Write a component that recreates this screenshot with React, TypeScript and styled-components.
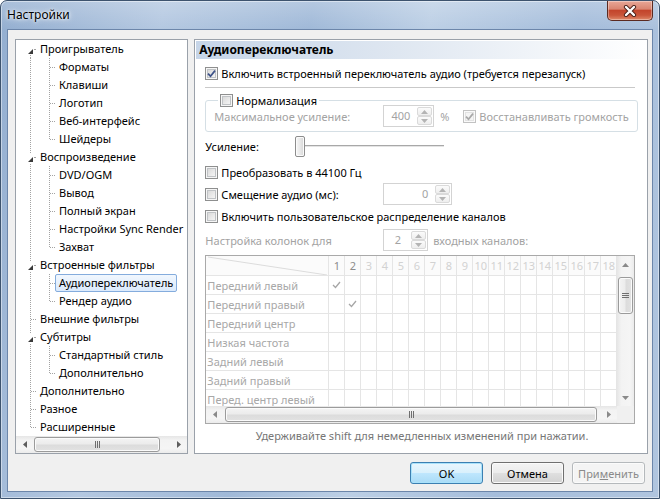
import React from "react";
import styled, { createGlobalStyle } from "styled-components";

const FONT = `"Noto Sans", "Open Sans", "DejaVu Sans", sans-serif`;

const GlobalStyle = createGlobalStyle`
  html, body {
    margin: 0;
    padding: 0;
  }
  body {
    width: 660px;
    height: 499px;
    overflow: hidden;
    font-family: ${FONT};
    font-size: 11px;
    color: #000;
  }
  * {
    box-sizing: border-box;
  }
`;

type TreeNode = { label: string; children?: string[] };

const tree: TreeNode[] = [
  { label: "Проигрыватель", children: ["Форматы", "Клавиши", "Логотип", "Веб-интерфейс", "Шейдеры"] },
  { label: "Воспроизведение", children: ["DVD/OGM", "Вывод", "Полный экран", "Настройки Sync Render", "Захват"] },
  { label: "Встроенные фильтры", children: ["Аудиопереключатель", "Рендер аудио"] },
  { label: "Внешние фильтры" },
  { label: "Субтитры", children: ["Стандартный стиль", "Дополнительно"] },
  { label: "Дополнительно" },
  { label: "Разное" },
  { label: "Расширенные" },
];

const SELECTED = "Аудиопереключатель";

const channels = [
  "Передний левый",
  "Передний правый",
  "Передний центр",
  "Низкая частота",
  "Задний левый",
  "Задний правый",
  "Перед. центр левый",
];

const Window = styled.div`
  width: 660px;
  height: 499px;
  display: flex;
  flex-direction: column;
  border: 1px solid #3d536e;
  border-radius: 7px 7px 0 0;
  background: linear-gradient(180deg, rgba(255, 255, 255, 0.22) 0, rgba(255, 255, 255, 0) 28px),
    linear-gradient(100deg, #93aed0 0%, #b4c8e1 22%, #a0b9d8 42%, #bccfe5 58%, #a5bddb 78%, #b0c5df 100%);
  box-shadow: inset 0 0 0 1px rgba(255, 255, 255, 0.45);
`;

const TitleBar = styled.div`
  height: 29px;
  display: flex;
  align-items: flex-start;
  justify-content: space-between;
`;

const Title = styled.div`
  padding: 6px 0 0 6px;
  line-height: 16px;
  font-size: 12px;
  text-shadow: 0 0 6px #fff, 0 0 3px #fff;
`;

const CloseButton = styled.div`
  width: 46px;
  height: 20px;
  margin-right: 6px;
  display: flex;
  align-items: center;
  justify-content: center;
  border: 1px solid #5b2a21;
  border-top: none;
  border-radius: 0 0 5px 5px;
  background: linear-gradient(180deg, #e8a797 0%, #d98571 42%, #c3452c 50%, #c9553a 75%, #df8a6b 100%);
  box-shadow: inset 0 0 0 1px rgba(255, 255, 255, 0.35);
`;

const Client = styled.div`
  flex: 1;
  margin: 0 7px 7px;
  padding: 9px 7px 0;
  display: flex;
  flex-direction: column;
  background: #f0f0f0;
  box-shadow: 0 0 0 1px #6c86aa;
`;

const Main = styled.div`
  height: 415px;
  display: flex;
  gap: 6px;
`;

const TreePanel = styled.div`
  width: 174px;
  display: flex;
  flex-direction: column;
  background: #fff;
  border: 1px solid #9aa1aa;
`;

const TreeList = styled.div`
  flex: 1;
  overflow: hidden;
`;

const TreeRow = styled.div`
  height: 18px;
  display: flex;
  align-items: center;
  white-space: nowrap;
`;

const GuideSvg = styled.svg`
  flex: none;
  display: block;
`;

const TreeLabel = styled.span<{ $selected?: boolean }>`
  height: 18px;
  line-height: 16px;
  padding: 0 3px;
  border: 1px solid ${(p) => (p.$selected ? "#84acdd" : "transparent")};
  border-radius: 2px;
  background: ${(p) => (p.$selected ? "linear-gradient(180deg, #f1f7fe 0%, #dbeafc 100%)" : "transparent")};
`;

const Page = styled.div`
  flex: 1;
  display: flex;
  flex-direction: column;
  background: #fff;
  border: 1px solid #9aa1aa;
`;

const PageHeader = styled.div`
  height: 18px;
  margin: 1px 1px 0;
  padding-left: 3px;
  line-height: 18px;
  font-weight: bold;
  font-size: 12px;
  background: linear-gradient(90deg, #c6d5e8 0%, #dfe7f1 45%, #ffffff 100%);
`;

const PageBody = styled.div`
  padding: 0 8px 0 10px;
  display: flex;
  flex-direction: column;
`;

const Row = styled.div<{ $mt?: number }>`
  height: 22px;
  margin-top: ${(p) => p.$mt ?? 0}px;
  display: flex;
  align-items: center;
  white-space: nowrap;
`;

const Text = styled.span<{ $disabled?: boolean; $w?: number; $ml?: number }>`
  color: ${(p) => (p.$disabled ? "#a3a3a3" : "#000")};
  width: ${(p) => (p.$w ? `${p.$w}px` : "auto")};
  margin-left: ${(p) => p.$ml ?? 0}px;
  flex: none;
`;

const Unit = styled.span`
  width: 29px;
  padding-left: 6px;
  flex: none;
  color: #a3a3a3;
`;

const CheckItem = styled.label<{ $w?: number }>`
  display: flex;
  align-items: center;
  gap: 3px;
  width: ${(p) => (p.$w ? `${p.$w}px` : "auto")};
  flex: none;
`;

const CheckBoxBox = styled.span<{ $disabled?: boolean }>`
  width: 13px;
  height: 13px;
  flex: none;
  display: inline-flex;
  align-items: center;
  justify-content: center;
  border: 1px solid ${(p) => (p.$disabled ? "#c2c2c2" : "#8e8f8f")};
  background: ${(p) =>
    p.$disabled ? "#f4f4f4" : "linear-gradient(135deg, #d2d2d2 0%, #ececec 60%, #fbfbfb 100%)"};
  box-shadow: inset 0 0 0 1px ${(p) => (p.$disabled ? "#fafafa" : "#f6f6f6")},
    inset 0 0 0 2px ${(p) => (p.$disabled ? "#e2e2e2" : "#c0c3c6")};
`;

const Separator = styled.div`
  height: 1px;
  margin: 3px 4px 0 0;
  background: #c9c9c9;
`;

const Group = styled.fieldset`
  margin: 4px 1px 0 0;
  padding: 0 8px 4px;
  min-width: 0;
  border: 1px solid #d5dfe5;
  border-radius: 3px;
`;

const GroupLegend = styled.legend`
  margin-left: 4px;
  padding: 0 2px;
  height: 16px;
  display: flex;
  align-items: center;
  gap: 3px;
`;

const GroupRow = styled(Row)`
  margin-top: -3px;
`;

const Spin = styled.div<{ $w: number }>`
  width: ${(p) => p.$w}px;
  height: 22px;
  flex: none;
  display: flex;
  border: 1px solid #d3d3d3;
  background: #fff;
`;

const SpinValue = styled.div<{ $center?: boolean }>`
  flex: 1;
  line-height: 20px;
  text-align: ${(p) => (p.$center ? "center" : "right")};
  padding-right: ${(p) => (p.$center ? 0 : 7)}px;
  color: #a3a3a3;
`;

const SpinButtons = styled.div`
  width: 15px;
  margin: 1px 1px 1px 0;
  display: flex;
  flex-direction: column;
`;

const SpinButton = styled.div`
  flex: 1;
  display: flex;
  align-items: center;
  justify-content: center;
  border: 1px solid #dadada;
  border-radius: 2px;
  background: linear-gradient(180deg, #fbfbfb, #eeeeee);
`;

const Slider = styled.div`
  width: 149px;
  height: 22px;
  flex: none;
  display: flex;
  align-items: center;
  background: linear-gradient(#a8a8a8, #a8a8a8) 4px 10px / 145px 1px no-repeat,
    linear-gradient(#e4e4e4, #e4e4e4) 4px 11px / 145px 1px no-repeat,
    linear-gradient(#ffffff, #ffffff) 4px 12px / 145px 1px no-repeat;
`;

const SliderThumb = styled.div`
  width: 10px;
  height: 21px;
  border: 1px solid #8d8d8d;
  border-radius: 2px;
  background: linear-gradient(90deg, #f7f7f7 0%, #e9e9e9 50%, #d6d6d6 100%);
  box-shadow: inset 0 0 0 1px #fbfbfb;
`;

const ChannelGrid = styled.div`
  width: 430px;
  height: 169px;
  margin-top: 4px;
  display: grid;
  grid-template-columns: 1fr 17px;
  grid-template-rows: 1fr 17px;
  border: 1px solid #a9a9a9;
  overflow: hidden;
`;

const Matrix = styled.div`
  display: grid;
  grid-template-columns: 123px repeat(18, 16px);
  grid-template-rows: 20px;
  grid-auto-rows: 19px;
  overflow: hidden;
  background: #fff;
`;

const Cell = styled.div<{ $head?: boolean; $label?: boolean; $enabled?: boolean }>`
  border-right: 1px solid #e5e5e5;
  border-bottom: 1px solid #e5e5e5;
  display: flex;
  align-items: center;
  justify-content: ${(p) => (p.$label ? "flex-start" : "center")};
  padding-left: ${(p) => (p.$label ? 1 : 0)}px;
  white-space: nowrap;
  overflow: hidden;
  color: ${(p) => (p.$head ? (p.$enabled ? "#8c8c8c" : "#d2d2d2") : "#a8a8a8")};
  background: ${(p) => (p.$head ? "#fbfbfb" : "#fff")};
`;

const Corner = styled.div`
  background: #f0f0f0;
`;

const ScrollBar = styled.div<{ $vertical?: boolean }>`
  display: flex;
  flex-direction: ${(p) => (p.$vertical ? "column" : "row")};
  ${(p) => (p.$vertical ? "width: 17px;" : "height: 17px;")}
  background: linear-gradient(
    ${(p) => (p.$vertical ? "90deg" : "180deg")},
    #e6e6e6 0%,
    #f3f3f3 25%,
    #f5f5f5 75%,
    #ebebeb 100%
  );
`;

const ScrollArrow = styled.div`
  width: 17px;
  height: 17px;
  flex: none;
  display: flex;
  align-items: center;
  justify-content: center;
`;

const ScrollSpace = styled.div`
  flex: 1;
`;

const ScrollThumb = styled.div<{ $vertical?: boolean; $before: number; $size: number }>`
  flex: none;
  display: flex;
  align-items: center;
  justify-content: center;
  ${(p) =>
    p.$vertical
      ? `margin: ${p.$before}px 1px 0; height: ${p.$size}px;`
      : `margin: 1px 0 1px ${p.$before}px; width: ${p.$size}px;`}
  border: 1px solid #9b9b9b;
  border-radius: 3px;
  background: linear-gradient(
    ${(p) => (p.$vertical ? "90deg" : "180deg")},
    #f4f4f4 0%,
    #ececec 45%,
    #dcdcdc 55%,
    #e2e2e2 100%
  );
  box-shadow: inset 0 0 0 1px #fbfbfb;
`;

const Footer = styled.div`
  height: 22px;
  margin-top: 1px;
  line-height: 22px;
  text-align: center;
  color: #767676;
`;

const ButtonBar = styled.div`
  margin-top: 8px;
  display: flex;
  justify-content: flex-end;
  gap: 8px;
`;

type Variant = "default" | "normal" | "disabled";

const DialogButton = styled.button<{ $variant: Variant }>`
  width: 73px;
  height: 22px;
  padding: 0;
  font-family: ${FONT};
  font-size: 11px;
  border-radius: 3px;
  color: ${(p) => (p.$variant === "disabled" ? "#8a8a8a" : "#000")};
  border: 1px solid
    ${(p) => (p.$variant === "default" ? "#3c7fb1" : p.$variant === "normal" ? "#707070" : "#b5b9bc")};
  background: ${(p) =>
    p.$variant === "default"
      ? "linear-gradient(180deg, #eaf6fd 0%, #d9f0fc 48%, #bee6fd 52%, #a9dbf6 100%)"
      : p.$variant === "normal"
        ? "linear-gradient(180deg, #f4f4f4 0%, #ececec 48%, #dfdfdf 52%, #d2d2d2 100%)"
        : "#f4f4f4"};
  box-shadow: inset 0 0 0 1px ${(p) => (p.$variant === "default" ? "#a9e2fb" : "#fbfbfb")};

  u {
    text-decoration: underline;
  }
`;

function CheckMark({ color }: { color: string }) {
  return (
    <svg width="9" height="9" viewBox="0 0 9 9">
      <path d="M1 4.6 L3.5 7.2 L8 1.6" fill="none" stroke={color} strokeWidth="1.7" />
    </svg>
  );
}

function CheckBox({ checked, disabled }: { checked?: boolean; disabled?: boolean }) {
  return (
    <CheckBoxBox $disabled={disabled}>
      {checked && <CheckMark color={disabled ? "#a8a8a8" : "#3d5288"} />}
    </CheckBoxBox>
  );
}

function Arrow({ dir, color = "#9a9a9a" }: { dir: "up" | "down" | "left" | "right"; color?: string }) {
  const pts = {
    up: "0,4 3.5,0 7,4",
    down: "0,0 3.5,4 7,0",
    left: "4,0 0,3.5 4,7",
    right: "0,0 4,3.5 0,7",
  }[dir];
  const vertical = dir === "up" || dir === "down";
  return (
    <svg width={vertical ? 7 : 4} height={vertical ? 4 : 7} viewBox={vertical ? "0 0 7 4" : "0 0 4 7"}>
      <polygon points={pts} fill={color} />
    </svg>
  );
}

function SpinEdit({ w, value, center }: { w: number; value: string; center?: boolean }) {
  return (
    <Spin $w={w}>
      <SpinValue $center={center}>{value}</SpinValue>
      <SpinButtons>
        <SpinButton>
          <Arrow dir="up" color="#b4b4b4" />
        </SpinButton>
        <SpinButton>
          <Arrow dir="down" color="#b4b4b4" />
        </SpinButton>
      </SpinButtons>
    </Spin>
  );
}

function Grip({ vertical }: { vertical?: boolean }) {
  return (
    <svg width="7" height="7" viewBox="0 0 7 7">
      <path
        d={vertical ? "M0 1.5 H7 M0 3.5 H7 M0 5.5 H7" : "M1.5 0 V7 M3.5 0 V7 M5.5 0 V7"}
        stroke="#6f6f6f"
        strokeWidth="1"
      />
    </svg>
  );
}

function Scroll({
  vertical,
  before,
  size,
  arrowColor,
}: {
  vertical?: boolean;
  before: number;
  size: number;
  arrowColor?: string;
}) {
  return (
    <ScrollBar $vertical={vertical}>
      <ScrollArrow>
        <Arrow dir={vertical ? "up" : "left"} color={arrowColor} />
      </ScrollArrow>
      <ScrollThumb $vertical={vertical} $before={before} $size={size}>
        <Grip vertical={vertical} />
      </ScrollThumb>
      <ScrollSpace />
      <ScrollArrow>
        <Arrow dir={vertical ? "down" : "right"} color={arrowColor} />
      </ScrollArrow>
    </ScrollBar>
  );
}

type FlatRow = {
  label: string;
  level: 0 | 1;
  firstRoot?: boolean;
  lastRoot?: boolean;
  hasChildren?: boolean;
  lastChild?: boolean;
};

function flatten(nodes: TreeNode[]): FlatRow[] {
  const rows: FlatRow[] = [];
  nodes.forEach((n, i) => {
    rows.push({
      label: n.label,
      level: 0,
      firstRoot: i === 0,
      lastRoot: i === nodes.length - 1,
      hasChildren: !!n.children,
    });
    n.children?.forEach((c, j) => {
      rows.push({ label: c, level: 1, lastChild: j === n.children!.length - 1 });
    });
  });
  return rows;
}

function Guides({ row }: { row: FlatRow }) {
  const dot = { stroke: "#a3a3a3", strokeDasharray: "1 1", strokeWidth: 1 };
  const width = row.level === 0 ? 20 : 39;
  return (
    <GuideSvg width={width} height={18} viewBox={`0 0 ${width} 18`}>
      {row.level === 0 ? (
        <>
          <line x1={14.5} x2={14.5} y1={row.firstRoot ? 9 : 0} y2={row.lastRoot ? 10 : 18} {...dot} />
          <line x1={15} x2={20} y1={9.5} y2={9.5} {...dot} />
        </>
      ) : (
        <>
          <line x1={14.5} x2={14.5} y1={0} y2={18} {...dot} />
          <line x1={33.5} x2={33.5} y1={0} y2={row.lastChild ? 10 : 18} {...dot} />
          <line x1={34} x2={39} y1={9.5} y2={9.5} {...dot} />
        </>
      )}
      {row.hasChildren && (
        <>
          <rect x={10} y={6} width={9} height={9} fill="#fff" />
          <polygon points="12,14 17,9 17,14" fill="#3a3a3a" />
          <line x1={18} x2={20} y1={9.5} y2={9.5} {...dot} />
        </>
      )}
    </GuideSvg>
  );
}

export default function App() {
  const rows = flatten(tree);
  return (
    <>
      <GlobalStyle />
      <Window>
        <TitleBar>
          <Title>Настройки</Title>
          <CloseButton>
            <svg width="14" height="12" viewBox="0 0 14 12">
              <path d="M3 2 L11 10 M11 2 L3 10" stroke="#4a1f18" strokeWidth="4.2" strokeLinecap="round" />
              <path d="M3 2 L11 10 M11 2 L3 10" stroke="#fff" strokeWidth="2.4" strokeLinecap="round" />
            </svg>
          </CloseButton>
        </TitleBar>
        <Client>
          <Main>
            <TreePanel>
              <TreeList>
                {rows.map((r, i) => (
                  <TreeRow key={i}>
                    <Guides row={r} />
                    <TreeLabel $selected={r.label === SELECTED}>{r.label}</TreeLabel>
                  </TreeRow>
                ))}
              </TreeList>
              <Scroll before={1} size={126} arrowColor="#5e5e5e" />
            </TreePanel>

            <Page>
              <PageHeader>Аудиопереключатель</PageHeader>
              <PageBody>
                <Row $mt={3}>
                  <CheckItem>
                    <CheckBox checked />
                    <Text>Включить встроенный переключатель аудио (требуется перезапуск)</Text>
                  </CheckItem>
                </Row>
                <Separator />
                <Group>
                  <GroupLegend>
                    <CheckBox />
                    <Text>Нормализация</Text>
                  </GroupLegend>
                  <GroupRow>
                    <Text $disabled $w={169}>
                      Максимальное усиление:
                    </Text>
                    <SpinEdit w={51} value="400" />
                    <Unit>%</Unit>
                    <CheckItem>
                      <CheckBox checked disabled />
                      <Text $disabled>Восстанавливать громкость</Text>
                    </CheckItem>
                  </GroupRow>
                </Group>
                <Row $mt={3}>
                  <Text $w={90}>Усиление:</Text>
                  <Slider>
                    <SliderThumb />
                  </Slider>
                </Row>
                <Row $mt={4}>
                  <CheckItem>
                    <CheckBox />
                    <Text>Преобразовать в 44100 Гц</Text>
                  </CheckItem>
                </Row>
                <Row>
                  <CheckItem $w={178}>
                    <CheckBox />
                    <Text>Смещение аудио (мс):</Text>
                  </CheckItem>
                  <SpinEdit w={69} value="0" />
                </Row>
                <Row>
                  <CheckItem>
                    <CheckBox />
                    <Text>Включить пользовательское распределение каналов</Text>
                  </CheckItem>
                </Row>
                <Row $mt={2}>
                  <Text $disabled $w={178}>
                    Настройка колонок для
                  </Text>
                  <SpinEdit w={45} value="2" center />
                  <Text $disabled $ml={5}>
                    входных каналов:
                  </Text>
                </Row>
                <ChannelGrid>
                  <Matrix>
                    <Cell $head>
                      <svg width="122" height="19" viewBox="0 0 122 19">
                        <line x1="2" y1="1" x2="121" y2="19" stroke="#dcdcdc" strokeWidth="1" />
                      </svg>
                    </Cell>
                    {Array.from({ length: 18 }, (_, c) => (
                      <Cell key={c} $head $enabled={c < 2}>
                        {c + 1}
                      </Cell>
                    ))}
                    {channels.map((name, r) => (
                      <React.Fragment key={name}>
                        <Cell $label>{name}</Cell>
                        {Array.from({ length: 18 }, (_, c) => (
                          <Cell key={c}>
                            {c === r && r < 2 && (
                              <svg width="9" height="8" viewBox="0 0 9 8">
                                <path d="M1 4 L3.5 6.5 L8 1" fill="none" stroke="#a6a6a6" strokeWidth="1.3" />
                              </svg>
                            )}
                          </Cell>
                        ))}
                      </React.Fragment>
                    ))}
                  </Matrix>
                  <Scroll vertical before={4} size={37} arrowColor="#8a8a8a" />
                  <Scroll before={2} size={372} arrowColor="#8a8a8a" />
                  <Corner />
                </ChannelGrid>
                <Footer>Удерживайте shift для немедленных изменений при нажатии.</Footer>
              </PageBody>
            </Page>
          </Main>
          <ButtonBar>
            <DialogButton $variant="default">OK</DialogButton>
            <DialogButton $variant="normal">Отмена</DialogButton>
            <DialogButton $variant="disabled">
              При<u>м</u>енить
            </DialogButton>
          </ButtonBar>
        </Client>
      </Window>
    </>
  );
}
